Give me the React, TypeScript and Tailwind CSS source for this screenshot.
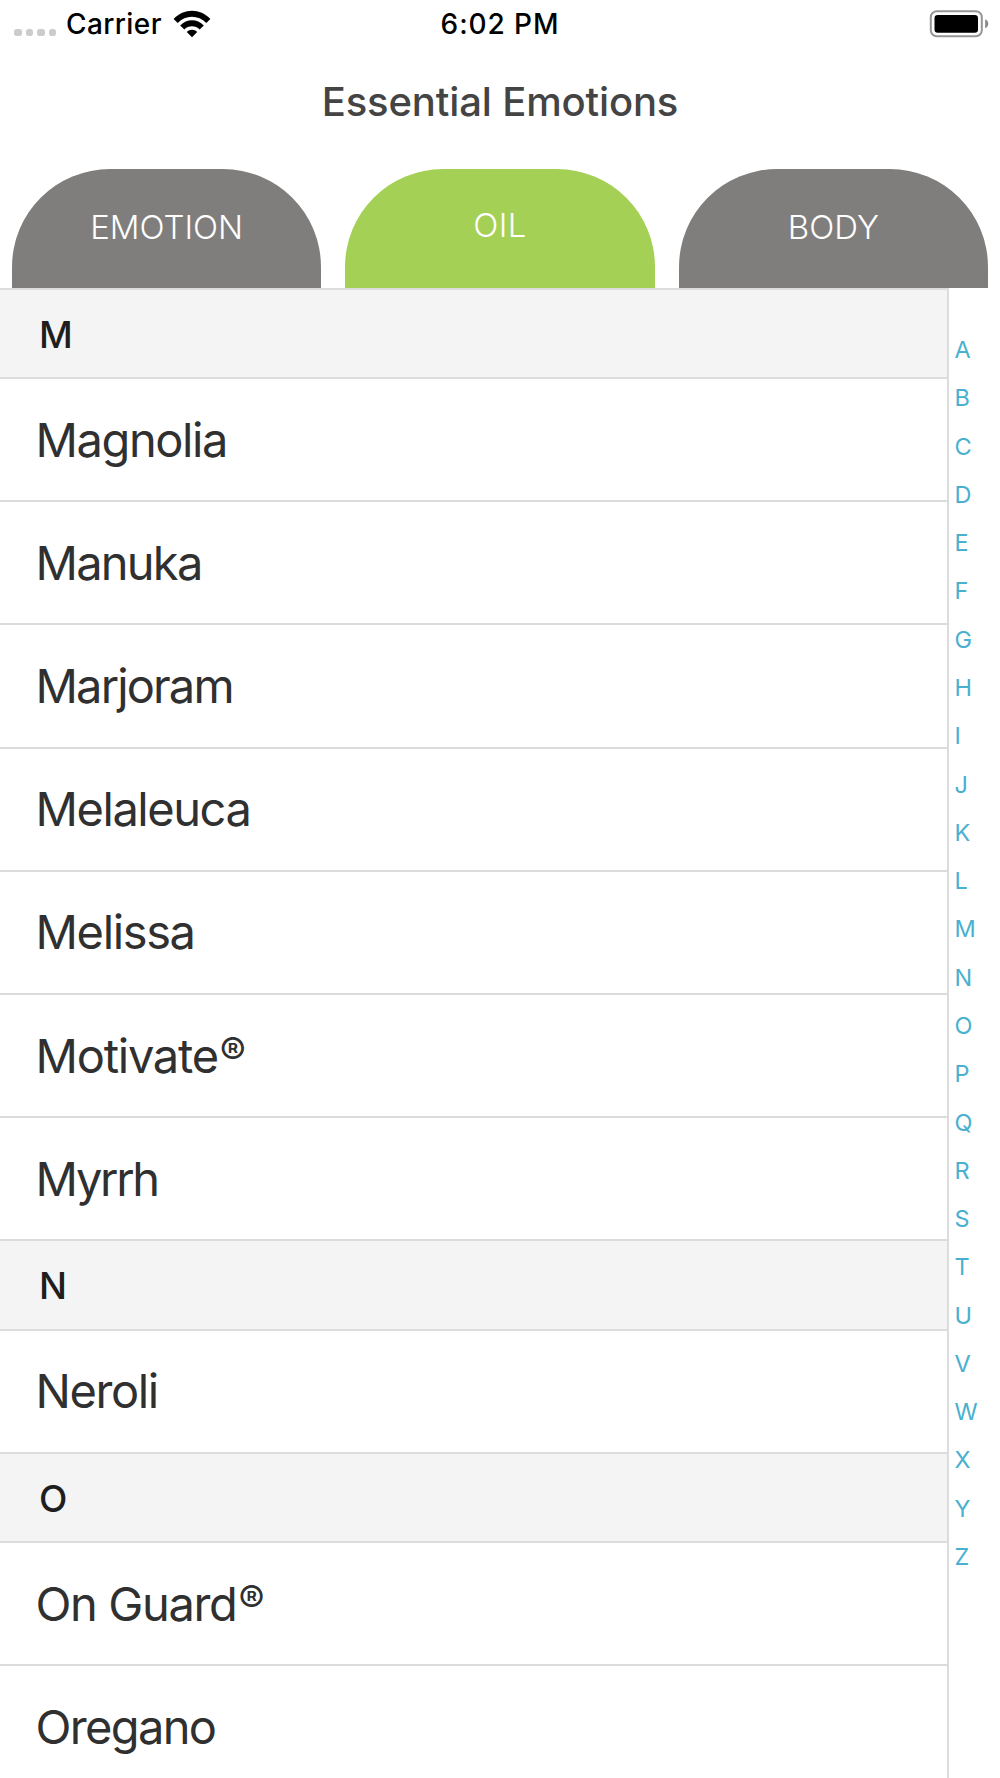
import React from "react";

type Item = { name: string; tracking: string; mark?: boolean };
type Section = { letter: string; height: string; items: Item[] };

const sections: Section[] = [
  {
    letter: "M",
    height: "h-[89px]",
    items: [
      { name: "Magnolia", tracking: "tracking-[-1.42px]" },
      { name: "Manuka", tracking: "tracking-[-1.76px]" },
      { name: "Marjoram", tracking: "tracking-[-1.86px]" },
      { name: "Melaleuca", tracking: "tracking-[-1.45px]" },
      { name: "Melissa", tracking: "tracking-[-1.36px]" },
      { name: "Motivate", tracking: "tracking-[-1.25px]", mark: true },
      { name: "Myrrh", tracking: "tracking-[-2.3px]" },
    ],
  },
  {
    letter: "N",
    height: "h-[89.3px]",
    items: [{ name: "Neroli", tracking: "tracking-[-1.43px]" }],
  },
  {
    letter: "O",
    height: "h-[89.3px]",
    items: [
      { name: "On Guard", tracking: "tracking-[-1.37px]", mark: true },
      { name: "Oregano", tracking: "tracking-[-1.65px]" },
    ],
  },
];

const tabs = [
  { label: "EMOTION", style: "bg-[#807e7c] pt-[38px]" },
  { label: "OIL", style: "bg-[#a4d055] pt-[36px] tracking-[0.4px]" },
  { label: "BODY", style: "bg-[#807e7c] pt-[38px]" },
];

const alphabet = "ABCDEFGHIJKLMNOPQRSTUVWXYZ".split("");

function WifiIcon() {
  return (
    <svg className="ml-[11px] h-[28px] w-[38px] shrink-0" viewBox="0 0 38 28">
      <path d="M0.6 8.9 C10.8 -2.1 27.2 -2.1 37.4 8.9 L33.3 12.9 C25.4 4.8 12.6 4.8 4.7 12.9 Z" />
      <path d="M7.2 15.6 C13.6 8.6 24.4 8.6 30.8 15.6 L26.7 19.5 C22.5 15.1 15.5 15.1 11.3 19.5 Z" />
      <path d="M13.8 22.1 C16.6 19 21.4 19 24.2 22.1 L19 27.3 Z" />
    </svg>
  );
}

function BatteryIcon() {
  return (
    <svg className="h-[28px] w-[60px]" viewBox="0 0 60 28">
      <rect x="1.8" y="1.2" width="51" height="25" rx="6" fill="none" stroke="#969696" strokeWidth="2" />
      <rect x="5.5" y="5" width="43.5" height="17.8" rx="3.2" fill="#000" />
      <path d="M56.2 9.3 C60.2 10.8 60.2 16.8 56.2 18.3 Z" fill="#888" />
    </svg>
  );
}

export default function App() {
  return (
    <div className="flex h-[1778px] w-[1000px] flex-col overflow-hidden bg-white font-['Inter',sans-serif] text-black">
      <div className="grid h-[47px] grid-cols-3 items-center text-[28px] leading-[36px] font-[450]">
        <div className="flex items-center pl-[14.4px]">
          <div className="mt-[18px] flex gap-[4px]">
            {[0, 1, 2, 3].map((dot) => (
              <span key={dot} className="size-[7.4px] rounded-[2.8px] bg-[#cccccc]" />
            ))}
          </div>
          <span className="ml-[10px] tracking-[0.4px]">Carrier</span>
          <WifiIcon />
        </div>
        <div className="text-center tracking-[0.9px]">6:02 PM</div>
        <div className="flex justify-end pr-[11.5px]">
          <BatteryIcon />
        </div>
      </div>

      <h1 className="mt-[30.5px] h-[91.5px] text-center text-[40px] leading-[48px] font-[480] tracking-[-0.15px] text-[#444444]">
        Essential Emotions
      </h1>

      <nav className="grid h-[119px] grid-cols-3 gap-[24px] px-[12px]">
        {tabs.map((tab) => (
          <button
            key={tab.label}
            className={`flex h-[118.5px] items-start justify-center rounded-t-[98px] text-[33px] leading-[40px] font-[340] text-white ${tab.style}`}
          >
            {tab.label}
          </button>
        ))}
      </nav>

      <main className="flex flex-1 overflow-hidden">
        <div className="w-[949px] overflow-hidden border-t-2 border-r-2 border-[#dcdcdc]">
          {sections.map((section) => (
            <section key={section.letter}>
              <h2
                className={`flex items-center border-b-2 border-[#dcdcdc] bg-[#f4f4f4] pt-[3px] pl-[39px] text-[37px] leading-[44px] font-[480] text-[#1e1e1e] ${section.height}`}
              >
                {section.letter}
              </h2>
              <ul>
                {section.items.map((item) => (
                  <li
                    key={item.name}
                    className="flex h-[123.2px] items-center border-b-2 border-[#dcdcdc] pl-[35.5px] text-[47px] leading-[56px] text-[#303030]"
                  >
                    <span className={item.tracking}>{item.name}</span>
                    {item.mark && <span className="-mt-[8px] ml-[2px] text-[39px]">®</span>}
                  </li>
                ))}
              </ul>
            </section>
          ))}
        </div>
        <ol className="flex flex-col pt-[38px] pl-[5.5px] text-[23.5px] leading-[48.28px] text-[#4ab0cf]">
          {alphabet.map((letter) => (
            <li key={letter}>{letter}</li>
          ))}
        </ol>
      </main>
    </div>
  );
}
